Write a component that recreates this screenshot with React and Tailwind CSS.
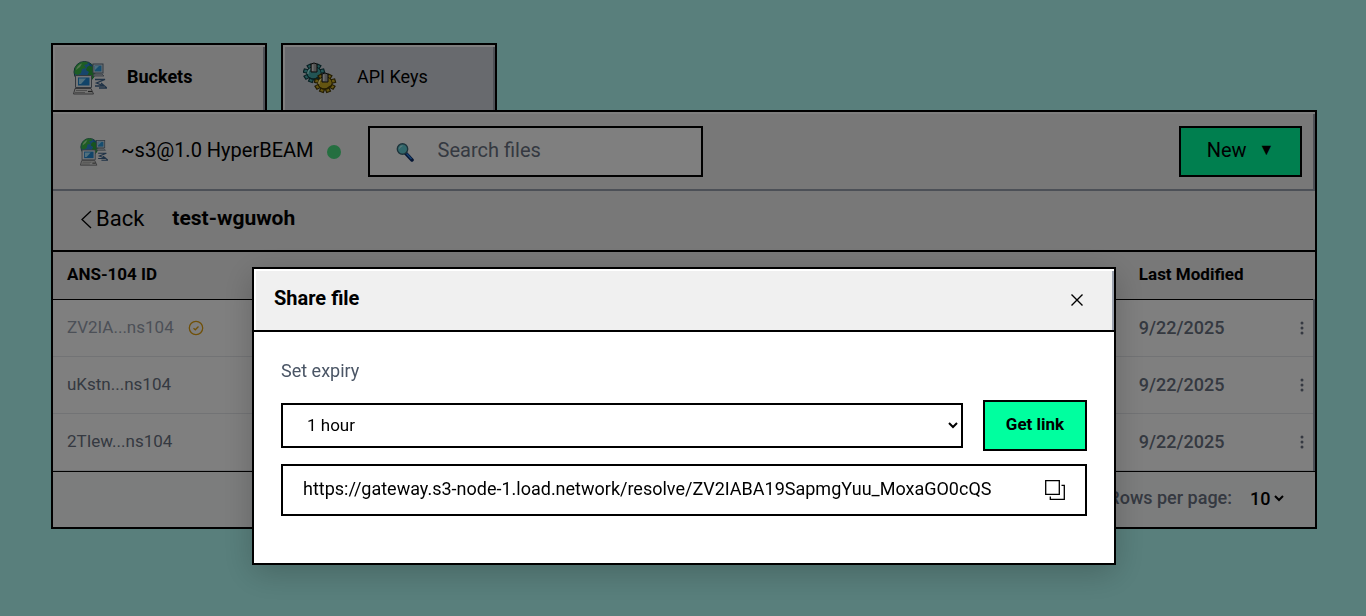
import React, { useState } from 'react';

const NetworkIcon = ({ className }) => (
  <svg viewBox="0 0 34 34" className={className} aria-hidden="true">
    <circle cx="11.500" cy="11" r="10.500" fill="#2f8ad6" stroke="#256a52" strokeWidth="1" />
    <path d="M1.500 11 Q2 3 9 1 L14 1 L15 3 L11 4 L13 7 L9 8 L8 12 L5 14 L2 13 Z" fill="#3dbb48" />
    <path d="M14 6 L19 3 L22 8 L21 16 L18 20 L14 15 L16 11 L13 9 Z" fill="#2fa83d" />
    <path d="M3 9 Q4 4 9 2.500 L7 6 Z" fill="#a6e9a0" />
    <path d="M15 2 Q19 3 20.500 6 L17 5 Z" fill="#1d6fc2" />
    <rect x="20" y="3" width="10" height="9" fill="#dfe4ea" stroke="#5e7285" />
    <rect x="21.500" y="4.500" width="7" height="6" fill="#2f9bdf" />
    <path d="M22 5 H26 L22 9 Z" fill="#9adcf8" />
    <path d="M21 13 H29 L31 15 H20 Z" fill="#c7cdd4" stroke="#6b7785" strokeWidth="0.800" />
    <path d="M2.500 14.500 H18.500 V26.500 H2.500 Z" fill="#e9ecef" stroke="#66707c" />
    <rect x="5" y="16.500" width="11.500" height="8" fill="#2288d2" />
    <path d="M6 17.500 H13 L8 23 H6 Z" fill="#a2e1fa" />
    <path d="M2 27.500 H18 L20.500 33 H0.500 Z" fill="#e3e3e0" stroke="#6f6f72" />
    <path d="M3 29.500 H14 M2 31.500 H12" stroke="#8a8a8a" strokeWidth="0.800" />
    <path d="M15 30.500 H19" stroke="#444" strokeWidth="1.200" />
    <path d="M22 18.500 H32 L23.500 22 L31 25 H22 M28 22 L34 27 H26" fill="none" stroke="#3e648c" strokeWidth="1.300" />
  </svg>
);

const Gear = ({ fill, light, dark }) => (
  <g>
    <g transform="scale(1 0.9)">
      <g fill={fill} stroke={dark} strokeWidth="1.200">
        {[30, 75, 120, 160, 200, 240, 285, 330].map((angle) => (
          <rect key={angle} x="-2" y="-10.500" width="4" height="6" transform={`rotate(${angle})`} />
        ))}
        <circle r="7" />
      </g>
      <circle r="6.500" fill={fill} />
      <path d="M-6 1 A6 6 0 0 1 -3 -5" fill="none" stroke={light} strokeWidth="1.500" />
      <path d="M-5 5 Q0 9 6 3" fill="none" stroke={dark} strokeWidth="1.500" />
    </g>
    <path d="M-3 -9 Q0 -11 3 -9 V-1 H-3 Z" fill="#a5a5a5" stroke="#161616" />
    <path d="M-1.200 -8.500 V-2" stroke="#ececec" strokeWidth="1.200" />
  </g>
);

const GearsIcon = ({ className }) => (
  <svg viewBox="0 0 34 34" className={className} aria-hidden="true">
    <g transform="translate(11 12)">
      <Gear fill="#45abaa" light="#a5efed" dark="#103f46" />
    </g>
    <g transform="translate(22 22)">
      <Gear fill="#c9ab22" light="#fff09a" dark="#463804" />
    </g>
  </svg>
);

const SearchIcon = () => (
  <svg viewBox="0 0 18 20" className="h-5 w-[18px] shrink-0" aria-hidden="true">
    <path d="M9.500 11 L16 18" stroke="#0a2a66" strokeWidth="3.500" strokeLinecap="round" />
    <path d="M10.500 11.500 L15.500 17" stroke="#2c7fe0" strokeWidth="1.500" />
    <circle cx="6.500" cy="7" r="5.200" fill="#62cfd6" stroke="#3b6675" strokeWidth="1.400" />
    <path d="M3.500 6.500 Q4 4 6.500 3.800" fill="none" stroke="#c9f6f7" />
  </svg>
);

const BackIcon = () => (
  <svg viewBox="0 0 12 20" className="h-5 w-3" fill="none" stroke="currentColor" strokeWidth="1.300" aria-hidden="true">
    <path d="M11 2 L2 10.500 L11 19" />
  </svg>
);

const VerifiedIcon = () => (
  <svg viewBox="0 0 16 16" className="h-4 w-4" fill="none" stroke="#e0a010" strokeWidth="1.300" aria-hidden="true">
    <circle cx="8" cy="8" r="6.700" />
    <path d="M5.500 8.200 L7.300 9.800 L10.500 6.500" />
  </svg>
);

const DotsIcon = () => (
  <svg viewBox="0 0 4 14" className="h-3.5 w-1" fill="currentColor" aria-hidden="true">
    <circle cx="2" cy="2" r="1.500" />
    <circle cx="2" cy="7" r="1.500" />
    <circle cx="2" cy="12" r="1.500" />
  </svg>
);

const CloseIcon = () => (
  <svg viewBox="0 0 12 12" className="h-3 w-3" fill="none" stroke="currentColor" strokeWidth="1.400" aria-hidden="true">
    <path d="M0.500 0.500 L11.500 11.500 M11.500 0.500 L0.500 11.500" />
  </svg>
);

const CopyIcon = () => (
  <svg viewBox="0 0 20 20" className="h-5 w-5" fill="none" stroke="currentColor" strokeWidth="1.300" aria-hidden="true">
    <path d="M0.700 0.700 H14.300 V14.300 H0.700 Z" />
    <path d="M16.500 5.300 H19.300 V19.300 H5.300 V16.500" />
  </svg>
);

const files = [
  { id: 'ZV2IA...ns104', modified: '9/22/2025', verified: true },
  { id: 'uKstn...ns104', modified: '9/22/2025' },
  { id: '2TIew...ns104', modified: '9/22/2025' },
];

const Tab = ({ label, active, icon, onClick }) => (
  <button
    type="button"
    role="tab"
    aria-selected={active}
    onClick={onClick}
    className={`flex h-[67px] w-[216px] items-center gap-5 border-2 border-b-0 border-black px-5 text-lg text-black shadow-[inset_2px_2px_0_#ffffff,inset_-2px_0_0_#9ca3af] ${
      active ? 'bg-[#f0f0f0] font-bold' : 'bg-gray-300'
    }`}
  >
    {icon}
    <span className="pb-0.5">{label}</span>
  </button>
);

const ShareDialog = () => {
  const [expiry, setExpiry] = useState('1 hour');

  return (
    <div className="fixed inset-0 flex items-end justify-center bg-black/50 pb-[51px] pl-0.5">
      <div
        role="dialog"
        aria-labelledby="share-title"
        className="w-full max-w-[864px] border-2 border-black bg-white shadow-[0_8px_30px_rgba(0,0,0,0.2)]"
      >
        <div className="flex h-[63px] items-center justify-between border-b-2 border-black bg-[#f0f0f0] pr-[31px] pl-5 shadow-[inset_2px_2px_0_#ffffff,inset_-2px_0_0_#9ca3af]">
          <h2 id="share-title" className="pb-1 text-xl font-bold">Share file</h2>
          <button type="button" aria-label="Close">
            <CloseIcon />
          </button>
        </div>
        <div className="px-[27px] pt-[25px] pb-[47px]">
          <label htmlFor="expiry" className="mb-[15px] block text-lg text-gray-600">Set expiry</label>
          <div className="flex items-center gap-5">
            <select
              id="expiry"
              value={expiry}
              onChange={(e) => setExpiry(e.target.value)}
              className="h-[45px] min-w-0 flex-1 border-2 border-black bg-white pr-0.5 pb-0.5 pl-5 text-[17px]"
            >
              <option>1 hour</option>
              <option>1 day</option>
              <option>7 days</option>
            </select>
            <button type="button" className="h-[51px] w-[104px] border-2 border-black bg-[#00ff9f] pb-0.5 text-[17px] font-bold">
              Get link
            </button>
          </div>
          <div className="mt-[13px] flex h-[52px] items-center gap-10 border-2 border-black px-5">
            <input
              readOnly
              aria-label="Share link"
              value="https://gateway.s3-node-1.load.network/resolve/ZV2IABA19SapmgYuu_MoxaGO0cQS"
              className="min-w-0 flex-1 pb-0.5 text-lg outline-none"
            />
            <button type="button" aria-label="Copy link">
              <CopyIcon />
            </button>
          </div>
        </div>
      </div>
    </div>
  );
};

const App = () => {
  const [tab, setTab] = useState('buckets');

  return (
    <div className="min-h-screen bg-[#b2fff8] pt-[43px] pr-[49px] pl-[51px] font-[Roboto,sans-serif] text-black">
      <div role="tablist" className="flex gap-3.5">
        <Tab
          label="Buckets"
          active={tab === 'buckets'}
          onClick={() => setTab('buckets')}
          icon={<NetworkIcon className="h-[34px] w-[34px]" />}
        />
        <Tab
          label="API Keys"
          active={tab === 'keys'}
          onClick={() => setTab('keys')}
          icon={<GearsIcon className="h-[34px] w-[34px]" />}
        />
      </div>

      <main className="border-2 border-black bg-[#f0f0f0]">
        {/* Toolbar */}
        <div className="flex h-[79px] items-center border-b-2 border-gray-400 pt-0.5 pr-[13px] pl-[27px] shadow-[inset_0_2px_0_#ffffff,inset_-2px_0_0_#9ca3af]">
          <NetworkIcon className="h-7 w-7" />
          <h1 className="ml-[13px] pb-1 text-xl">~s3@1.0 HyperBEAM</h1>
          <span className="ml-[13px] h-3.5 w-3.5 rounded-full bg-[#4ade80]"></span>
          <label className="ml-[27px] flex h-[51px] w-[335px] items-center gap-6 border-2 border-black bg-white px-[26px]">
            <SearchIcon />
            <input
              type="text"
              aria-label="Search files"
              placeholder="Search files"
              className="min-w-0 flex-1 pb-1 text-xl outline-none placeholder:text-gray-500"
            />
          </label>
          <button type="button" className="ml-auto flex h-[51px] w-[123px] items-center justify-center gap-3 border-2 border-black bg-[#00ff9f] pb-1 text-xl">
            New <span className="text-base">▼</span>
          </button>
        </div>

        {/* Breadcrumb */}
        <div className="flex h-[61px] items-center gap-7 border-b-2 border-black pb-1 pl-[27px]">
          <button type="button" className="flex items-center gap-1 text-[22px]">
            <BackIcon />
            Back
          </button>
          <span className="text-[21px] font-bold">test-wguwoh</span>
        </div>

        <table className="w-full table-fixed border-collapse text-left">
          <thead>
            <tr className="h-[47px] border-b border-black text-[17px]">
              <th className="w-[15%] px-3.5 pb-0.5">ANS-104 ID</th>
              <th className="w-[50%] px-3.5 pb-0.5">Name</th>
              <th className="w-[20%] px-3.5 pb-0.5">Size</th>
              <th className="w-[15%] px-3.5 pb-0.5">Last Modified</th>
            </tr>
          </thead>
          <tbody className="bg-white">
            {files.map((file) => (
              <tr key={file.id} className="h-[57px] border-b border-gray-200 text-gray-500">
                <td className="px-3.5 text-[17px]">
                  <div className={`flex items-center gap-3.5 ${file.verified ? 'text-gray-400' : ''}`}>
                    {file.id}
                    {file.verified && <VerifiedIcon />}
                  </div>
                </td>
                <td className="px-3.5"></td>
                <td className="px-3.5"></td>
                <td className="border-r-2 border-r-gray-400 pr-[9px] pl-3.5 text-lg">
                  <div className="flex items-center justify-between font-medium">
                    {file.modified}
                    <button type="button" aria-label="File actions">
                      <DotsIcon />
                    </button>
                  </div>
                </td>
              </tr>
            ))}
          </tbody>
        </table>

        <div className="flex h-14 items-center justify-end gap-3.5 border-t border-black bg-gray-50 pr-7 pb-0.5 text-lg font-medium">
          <label htmlFor="rows" className="text-gray-500">Rows per page:</label>
          <select id="rows" className="bg-transparent">
            <option>10</option>
            <option>25</option>
          </select>
        </div>
      </main>

      <ShareDialog />
    </div>
  );
};

export default App;
